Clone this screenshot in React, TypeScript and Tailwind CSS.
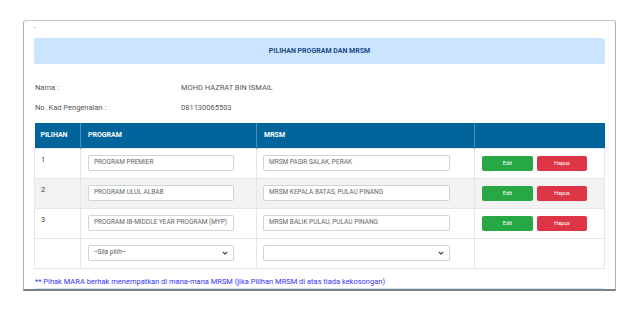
import React from 'react';

const ROWS = [
  { no: '1', program: 'PROGRAM PREMIER', mrsm: 'MRSM PASIR SALAK, PERAK' },
  { no: '2', program: 'PROGRAM ULUL ALBAB', mrsm: 'MRSM KEPALA BATAS, PULAU PINANG' },
  { no: '3', program: 'PROGRAM IB-MIDDLE YEAR PROGRAM (MYP)', mrsm: 'MRSM BALIK PULAU, PULAU PINANG' },
];

function Chevron() {
  return (
    <svg width="6" height="6" viewBox="0 0 16 16" className="text-[#444]">
      <path d="M3 6l5 5 5-5" fill="none" stroke="currentColor" strokeWidth="3" strokeLinecap="round" strokeLinejoin="round" />
    </svg>
  );
}

function SelectBox({ text }: { text?: string }) {
  return (
    <div className="flex h-[16px] items-center justify-between rounded-[2px] border border-[#ced4da] bg-white pl-[5px] pr-[5px] text-[6.5px] text-[#555]">
      <span>{text}</span>
      <Chevron />
    </div>
  );
}

function TextBox({ text }: { text: string }) {
  return (
    <div className="flex h-[16px] items-center rounded-[2px] border border-[#ced4da] bg-white px-[5px] text-[6.5px] text-[#666]">
      {text}
    </div>
  );
}

export default function App() {
  return (
    <div
      className="h-[312px] w-[640px] overflow-hidden bg-white pt-[20px]"
      style={{ fontFamily: 'Roboto, "Liberation Sans", sans-serif' }}
    >
      <div className="ml-[23px] h-[271px] w-[593px] overflow-hidden rounded-t-[3px] border-x border-t border-b-2 border-x-[#a9afbd] border-t-[#c3c7cf] border-b-[#808080] bg-white px-[10px]">
        <div className="h-[17px] pt-[3px] text-[6px] leading-none text-[#666]">-</div>

        <div className="flex h-[26px] items-center justify-center rounded-[2px] bg-[#cce5ff] text-[7px] font-bold text-[#1c4a86]">
          PILIHAN PROGRAM DAN MRSM
        </div>

        <div className="mt-[19px] flex flex-col gap-[11px] pl-[1px] text-[7.5px] leading-[9px] text-[#555]">
          <div className="flex">
            <span className="w-[146px]">Nama :</span>
            <span>MOHD HAZRAT BIN ISMAIL</span>
          </div>
          <div className="flex">
            <span className="w-[146px]">No. Kad Pengenalan :</span>
            <span>081130065503</span>
          </div>
        </div>

        <table className="mt-[11px] w-[570px] table-fixed border-collapse text-[6.5px]">
          <colgroup>
            <col className="w-[46px]" />
            <col className="w-[176px]" />
            <col className="w-[218px]" />
            <col className="w-[130px]" />
          </colgroup>
          <thead>
            <tr className="h-[25px] bg-[#01659b] text-left text-[7px] font-bold text-white">
              <th className="border-r border-[#4e8fb8] pl-[6px]">PILIHAN</th>
              <th className="border-r border-[#4e8fb8] pl-[7px]">PROGRAM</th>
              <th className="border-r border-[#4e8fb8] pl-[7px]">MRSM</th>
              <th></th>
            </tr>
          </thead>
          <tbody>
            {ROWS.map((r, i) => (
              <tr key={r.no} className={`h-[30px] ${i === 1 ? 'bg-[#f2f2f2]' : 'bg-white'}`}>
                <td className="border border-[#e3e6ea] pl-[6px] pt-[5px] align-top text-[7.5px] text-[#444]">{r.no}</td>
                <td className="border border-[#e3e6ea] pl-[7px] pr-[22px]">
                  <TextBox text={r.program} />
                </td>
                <td className="border border-[#e3e6ea] pl-[6px] pr-[24px]">
                  <TextBox text={r.mrsm} />
                </td>
                <td className="border border-[#e3e6ea] pl-[7px]">
                  <div className="flex gap-[4px]">
                    <button className="flex h-[15px] w-[51px] items-center justify-center rounded-[2px] bg-[#28a745] text-[5.5px] text-white">
                      Edit
                    </button>
                    <button className="flex h-[15px] w-[50px] items-center justify-center rounded-[2px] bg-[#dc3545] text-[5.5px] text-white">
                      Hapus
                    </button>
                  </div>
                </td>
              </tr>
            ))}
            <tr className="h-[30px] bg-white">
              <td className="border border-[#e3e6ea]"></td>
              <td className="border border-[#e3e6ea] pl-[7px] pr-[22px]">
                <SelectBox text="--Sila pilih--" />
              </td>
              <td className="border border-[#e3e6ea] pl-[6px] pr-[24px]">
                <SelectBox />
              </td>
              <td className="border border-[#e3e6ea]"></td>
            </tr>
          </tbody>
        </table>

        <div className="mt-[8px] pl-[1px] text-[7.5px] leading-[9px] text-[#3333f5]">
          ** Pihak MARA berhak menempatkan di mana-mana MRSM (jika Pilihan MRSM di atas tiada kekosongan)
        </div>
        <div className="mt-[2px] h-[3px] w-[570px] rounded-t-[2px] bg-[#cce5ff]"></div>
      </div>
    </div>
  );
}
